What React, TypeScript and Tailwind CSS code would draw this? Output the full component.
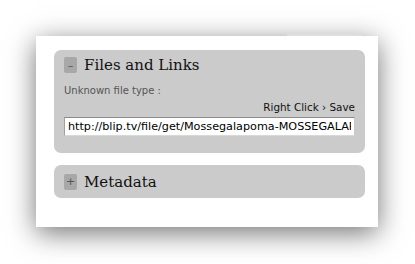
import { useState } from "react";

function Toggle({ open }: { open: boolean }) {
  return (
    <span className="flex h-[16px] w-[13px] shrink-0 items-center justify-center rounded-[2px] bg-[#a8a8a8] text-[11px] leading-none text-[#555] [font-family:'DejaVu_Sans',sans-serif]">
      {open ? "–" : "+"}
    </span>
  );
}

export default function App() {
  const [url] = useState(
    "http://blip.tv/file/get/Mossegalapoma-MOSSEGALAPOMA123.mov"
  );

  return (
    <div className="h-[264px] w-[415px] overflow-hidden bg-white pl-[36px] pt-[36px]">
      <div className="relative h-[191px] w-[342px] bg-white pl-[18px] pr-[13px] pt-[14px] shadow-[0_6px_26px_rgba(0,0,0,0.55)]">
        {/* edge of the tab above, cut off */}
        <div className="absolute left-[251px] top-[-2px] h-[2px] w-[75px] bg-[#dedede]" />

        {/* Files and Links */}
        <div className="h-[103px] rounded-[7px] bg-[#cbcbcb] pl-[10px] pr-[10px] pt-[7px]">
          <div className="flex items-center gap-[7px]">
            <Toggle open />
            <h3 className="text-[15px] leading-[16px] text-[#111] [font-family:'DejaVu_Serif',serif]">
              Files and Links
            </h3>
          </div>
          <p className="mt-[11px] text-[10px] leading-[13px] text-[#555] [font-family:'DejaVu_Sans',sans-serif]">
            Unknown file type :
          </p>
          <p className="mt-[4px] text-right text-[10.4px] leading-[13px] text-[#111] [font-family:'DejaVu_Sans',sans-serif]">
            Right Click › Save
          </p>
          <input
            type="text"
            readOnly
            value={url}
            className="mt-[3px] block h-[19px] w-full border border-t-[#8a8a8a] border-l-[#a0a0a0] border-r-[#c8c8c8] border-b-[#d8d8d8] bg-white px-[3px] text-[11.2px] text-black outline-none [font-family:'DejaVu_Sans',sans-serif]"
          />
        </div>

        {/* Metadata */}
        <div className="mt-[12px] flex h-[33px] items-center gap-[7px] rounded-[7px] bg-[#cbcbcb] pl-[10px]">
          <Toggle open={false} />
          <h3 className="text-[15px] leading-[16px] text-[#111] [font-family:'DejaVu_Serif',serif]">
            Metadata
          </h3>
        </div>
      </div>
    </div>
  );
}
